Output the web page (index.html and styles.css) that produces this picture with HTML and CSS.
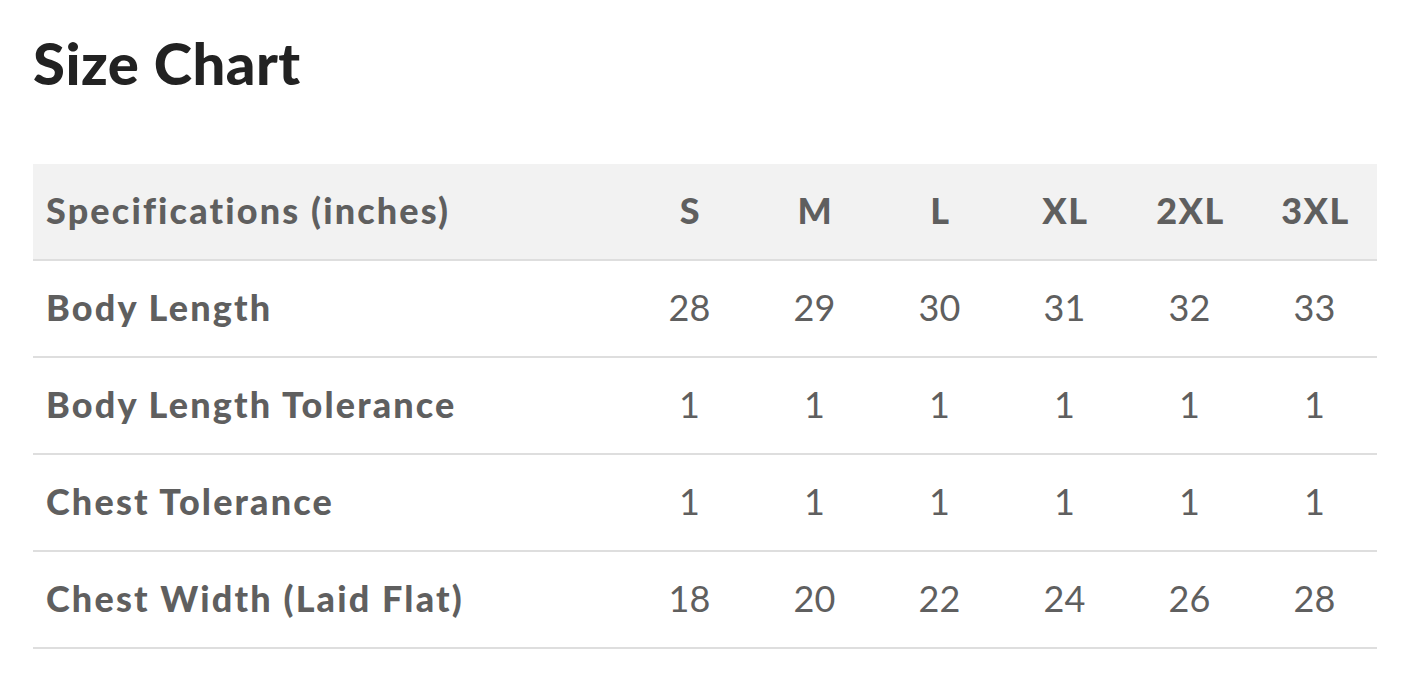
FILE: index.html
```html
<!DOCTYPE html>
<html lang="en">
<head>
<meta charset="utf-8">
<title>Size Chart</title>
<link rel="stylesheet" href="styles.css">
</head>
<body>
<div class="page">
  <h1 class="title">Size Chart</h1>
  <div class="chart">
    <div class="row head">
      <div class="cell label">Specifications (inches)</div>
      <div class="cell">S</div>
      <div class="cell">M</div>
      <div class="cell">L</div>
      <div class="cell">XL</div>
      <div class="cell">2XL</div>
      <div class="cell">3XL</div>
    </div>
    <div class="row">
      <div class="cell label">Body Length</div>
      <div class="cell">28</div>
      <div class="cell">29</div>
      <div class="cell">30</div>
      <div class="cell">31</div>
      <div class="cell">32</div>
      <div class="cell">33</div>
    </div>
    <div class="row">
      <div class="cell label">Body Length Tolerance</div>
      <div class="cell">1</div>
      <div class="cell">1</div>
      <div class="cell">1</div>
      <div class="cell">1</div>
      <div class="cell">1</div>
      <div class="cell">1</div>
    </div>
    <div class="row">
      <div class="cell label">Chest Tolerance</div>
      <div class="cell">1</div>
      <div class="cell">1</div>
      <div class="cell">1</div>
      <div class="cell">1</div>
      <div class="cell">1</div>
      <div class="cell">1</div>
    </div>
    <div class="row">
      <div class="cell label">Chest Width (Laid Flat)</div>
      <div class="cell">18</div>
      <div class="cell">20</div>
      <div class="cell">22</div>
      <div class="cell">24</div>
      <div class="cell">26</div>
      <div class="cell">28</div>
    </div>
  </div>
</div>
</body>
</html>
```
FILE: styles.css
```css
html, body {
  margin: 0;
  padding: 0;
  background: #ffffff;
}
body {
  font-family: Lato, "Noto Sans", sans-serif;
}
.page {
  padding: 28px 25px 0 33px;
}
.title {
  margin: 0;
  font-size: 58px;
  line-height: 70px;
  font-weight: 900;
  color: #222222;
  letter-spacing: 0.5px;
}
.chart {
  margin-top: 66px;
  width: 1344px;
}
.row {
  display: grid;
  grid-template-columns: 1fr repeat(6, 125px);
  height: 95px;
  border-bottom: 2px solid #dedede;
  color: #5f5f5f;
  font-size: 36px;
}
.row.head {
  background: #f2f2f2;
  font-weight: 900;
}
.row.head .cell {
  letter-spacing: 1.5px;
  padding-left: 2px;
}
.cell {
  display: flex;
  align-items: center;
  justify-content: center;
  padding-bottom: 3px;
}
.row .cell.label {
  justify-content: flex-start;
  padding-left: 13px;
  font-weight: 900;
  letter-spacing: 2.15px;
}
```
